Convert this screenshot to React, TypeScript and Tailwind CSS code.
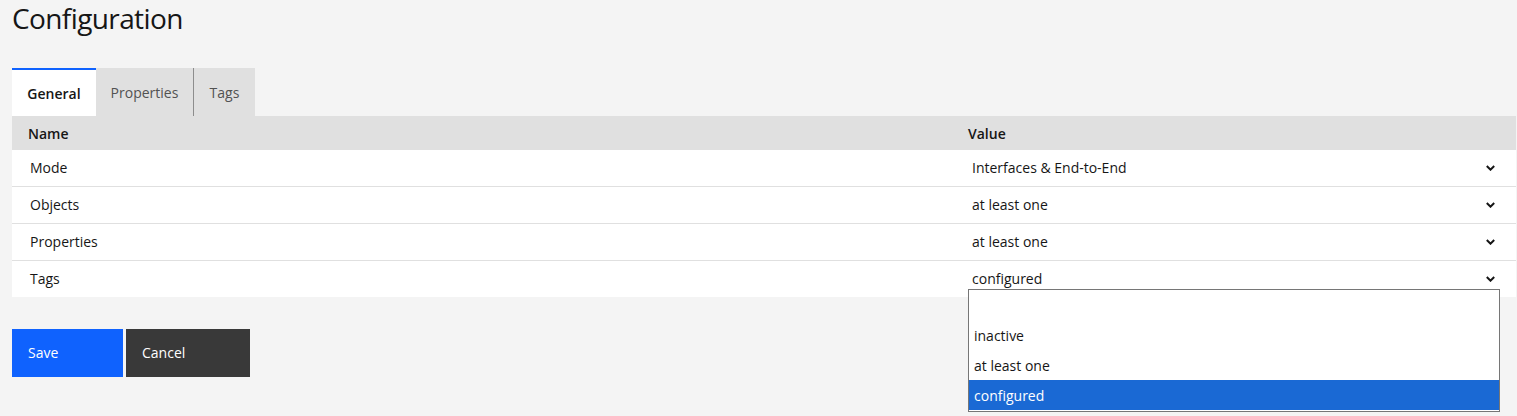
import React from "react";

const font = { fontFamily: '"Open Sans", "Noto Sans", sans-serif' };

function Chevron() {
  return (
    <svg width="9" height="6" viewBox="0 0 9 6" className="shrink-0">
      <path d="M0.8 1 L4.5 4.7 L8.2 1" fill="none" stroke="#161616" strokeWidth="2" />
    </svg>
  );
}

const rows = [
  { name: "Mode", value: "Interfaces & End-to-End" },
  { name: "Objects", value: "at least one" },
  { name: "Properties", value: "at least one" },
  { name: "Tags", value: "configured" },
];

export default function App() {
  return (
    <div
      className="w-[1517px] h-[416px] bg-[#f4f4f4] text-[#161616] overflow-hidden pl-3"
      style={font}
    >
      <h1 className="text-[28px] leading-[36px] font-normal h-[68px] tracking-[-0.6px]">
        Configuration
      </h1>
      <div className="flex h-12">
        <div className="w-[84px] bg-white border-t-2 border-[#0f62fe] flex items-center justify-center text-[14px] font-semibold text-[#161616]">
          General
        </div>
        <div className="w-[98px] bg-[#e0e0e0] flex items-center justify-center text-[14px] text-[#525252] border-r border-[#8d8d8d]">
          Properties
        </div>
        <div className="w-[61px] bg-[#e0e0e0] flex items-center justify-center text-[14px] text-[#525252]">
          Tags
        </div>
      </div>
      <div className="w-[1504px] relative">
        <div className="grid grid-cols-[940px_1fr] h-[34px] bg-[#e0e0e0] items-center text-[14px] font-semibold">
          <div className="pl-4">Name</div>
          <div className="pl-4">Value</div>
        </div>
        {rows.map((r, i) => (
          <div
            key={r.name}
            className={`grid grid-cols-[940px_1fr] bg-white items-center text-[14px] leading-[20px] ${
              i < rows.length - 1 ? "h-[37px] border-b border-[#e0e0e0] pb-[1px]" : "h-[36px] pb-[1px]"
            }`}
          >
            <div className="pl-[18px]">{r.name}</div>
            <div className="pl-5 pr-[21px] flex items-center justify-between">
              <span>{r.value}</span>
              <Chevron />
            </div>
          </div>
        ))}
        <div className="absolute left-[956px] top-[173px] w-[532px] h-[123px] bg-white border border-[#767676] text-[14px] flex flex-col">
          <div className="h-[30px]"></div>
          <div className="h-[30px] flex items-center pl-[5px]">inactive</div>
          <div className="h-[30px] flex items-center pl-[5px]">at least one</div>
          <div className="h-[30px] flex items-center pl-[5px] bg-[#1a69d4] text-white">configured</div>
        </div>
      </div>
      <div className="flex gap-[3px] mt-8">
        <button className="w-[111px] h-12 bg-[#0f62fe] text-white text-[14px] leading-[20px] text-left pl-4 pb-[1px]">
          Save
        </button>
        <button className="w-[124px] h-12 bg-[#393939] text-white text-[14px] leading-[20px] text-left pl-4 pb-[1px]">
          Cancel
        </button>
      </div>
    </div>
  );
}
